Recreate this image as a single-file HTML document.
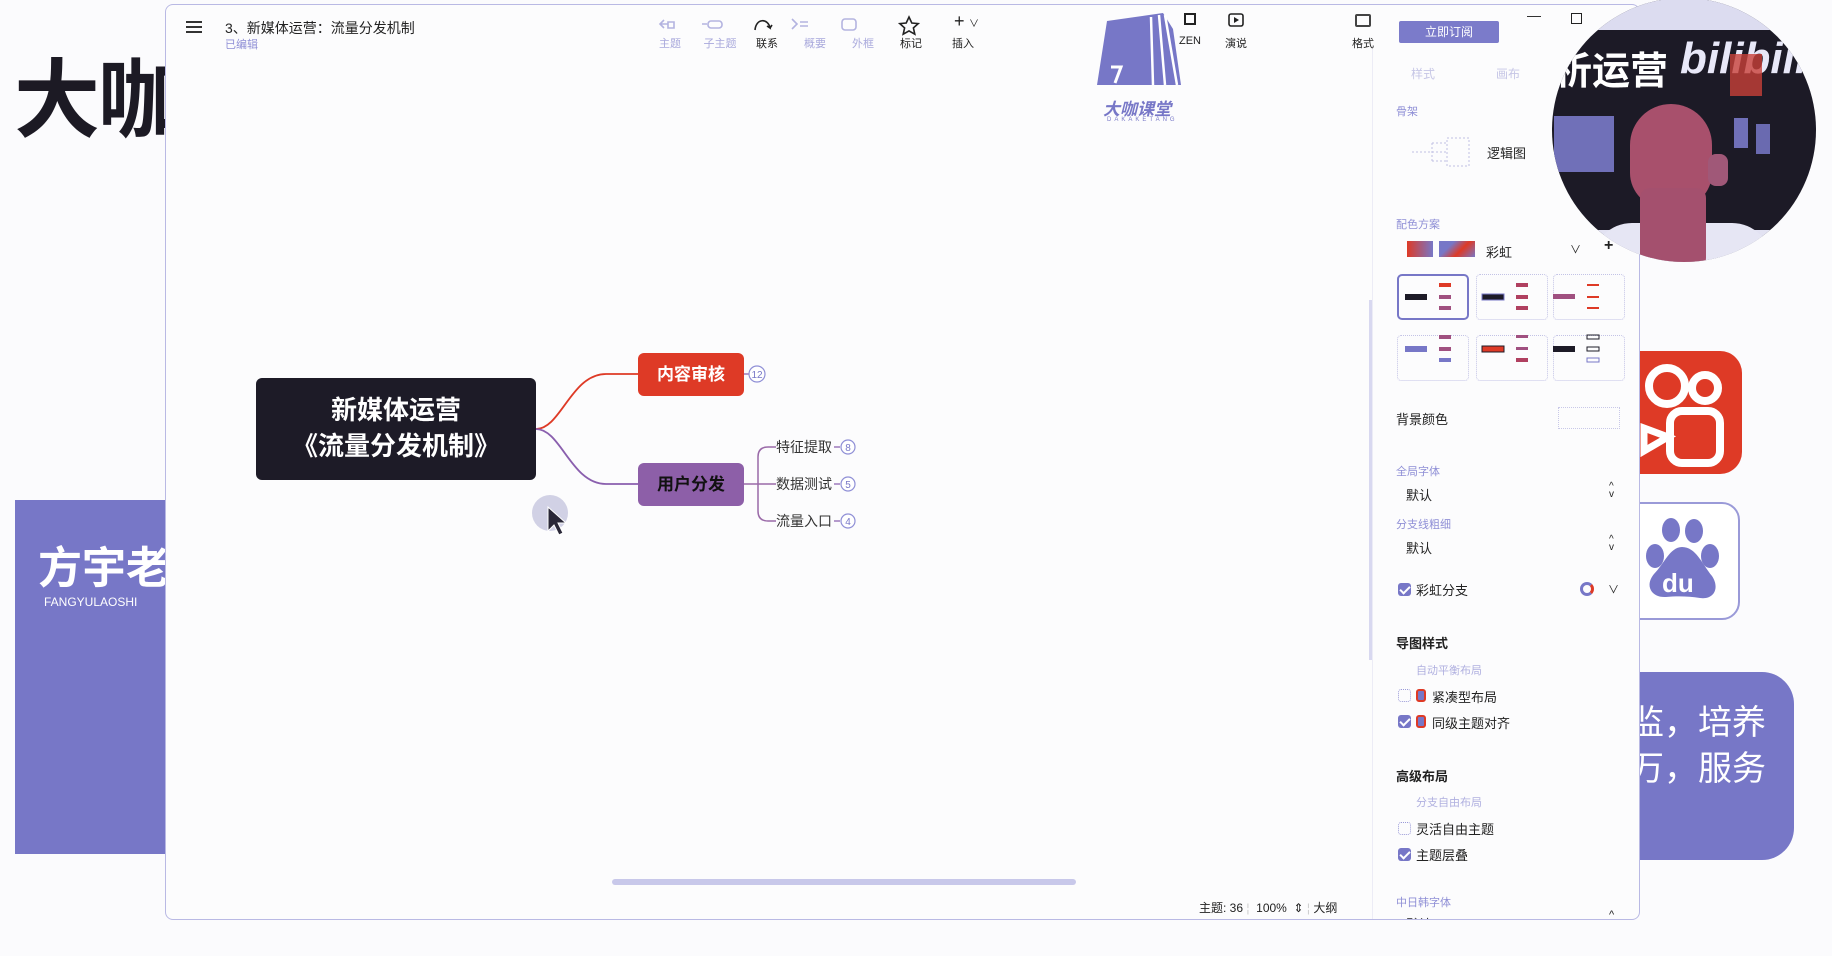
<!DOCTYPE html>
<html><head><meta charset="utf-8">
<style>
*{margin:0;padding:0;box-sizing:border-box}
body{width:1832px;height:956px;overflow:hidden;background:#fbfbfd;font-family:"Liberation Sans","Noto Sans CJK SC",sans-serif;position:relative;color:#222}
.a{position:absolute;white-space:nowrap}
.win{position:absolute;left:165px;top:4px;width:1475px;height:916px;background:#fcfcfd;border:1px solid #b9b9e4;border-radius:8px;overflow:hidden}
.tb{font-size:11px;color:#a9a9dc;text-align:center;width:40px}
.tb.d{color:#222}
.lab{font-size:11px;color:#8f8fd6}
.txt{font-size:13px;color:#222}
.cb{position:absolute;width:13px;height:13px;border-radius:3px}
.cb.on{background:#7777c7}
.cb.on::after{content:"";position:absolute;left:4px;top:1px;width:4px;height:8px;border:solid #fff;border-width:0 2px 2px 0;transform:rotate(45deg)}
.cb.off{border:1px dotted #9a9ad8}
.card{position:absolute;width:72px;height:46px;border:1px dotted #c3c3e6;border-radius:4px}
</style></head><body>
<div class="a" style="left:14px;top:30px;font-size:86px;font-weight:bold;color:#1c1a24;letter-spacing:-2px">大咖</div>
<div class="a" style="left:15px;top:500px;width:160px;height:354px;background:#7777c7"></div>
<div class="a" style="left:38px;top:532px;font-size:44px;font-weight:bold;color:#fff">方宇老</div>
<div class="a" style="left:44px;top:595px;font-size:12px;color:#fff">FANGYULAOSHI</div>
<div class="a" style="left:1630px;top:351px;width:112px;height:123px;background:#de3a26;border-radius:0 22px 22px 0"></div>
<svg class="a" style="left:1630px;top:351px" width="112" height="123" viewBox="0 0 112 123">
<circle cx="37" cy="35" r="18" fill="none" stroke="#fff" stroke-width="8"/>
<circle cx="75" cy="37" r="13" fill="none" stroke="#fff" stroke-width="8"/>
<rect x="40" y="60" width="50" height="52" rx="12" fill="none" stroke="#fff" stroke-width="8"/>
<path d="M14 77 L38 86 L14 100Z" fill="none" stroke="#fff" stroke-width="7"/>
</svg>
<div class="a" style="left:1630px;top:502px;width:110px;height:118px;background:#fff;border:2px solid #9a9ad8;border-radius:0 18px 18px 0"></div>
<svg class="a" style="left:1630px;top:502px" width="110" height="118" viewBox="0 0 110 118">
<g fill="#7777c7"><ellipse cx="41" cy="28" rx="9" ry="12"/><ellipse cx="64" cy="29" rx="9" ry="12"/><ellipse cx="25" cy="54" rx="9" ry="12"/><ellipse cx="80" cy="54" rx="9" ry="12"/>
<path d="M52 45 C40 45 34 62 24 72 C14 84 22 96 36 95 C46 94 58 94 70 96 C84 98 90 86 82 74 C72 62 66 45 52 45Z"/></g>
<text x="32" y="90" font-size="26" font-weight="bold" fill="#fff" font-family="Liberation Sans">du</text>
</svg>
<div class="a" style="left:1630px;top:672px;width:164px;height:188px;background:#7777c7;border-radius:0 32px 32px 0"></div>
<div class="a" style="left:1630px;top:700px;font-size:34px;color:#fff;line-height:46px">监，培养<br>万，服务</div>

<div class="win">
 <div class="a" style="left:20px;top:16px;width:16px;height:2px;background:#333;box-shadow:0 5px 0 #333,0 10px 0 #333"></div>
 <div class="a" style="left:59px;top:13px;font-size:14px;color:#222">3、新媒体运营：流量分发机制</div>
 <div class="a" style="left:59px;top:31px;font-size:11px;color:#8f8fd6">已编辑</div>
 <svg class="a" style="left:490px;top:10px" width="330" height="22" viewBox="0 0 330 22" fill="none" stroke-width="1.6">
  <g stroke="#b3b3e0"><path d="M8 5 l-4 4 4 4 M4 9 h8 M12 7h6v6h-6z"/><rect x="52" y="6" width="14" height="7" rx="3"/><path d="M46 9h5"/><rect x="186" y="4" width="14" height="11" rx="3"/><path d="M136 4l5 5-5 5 M144 7h8 M144 11h8"/></g>
  <path d="M153 15 C154 3 166 3 168 13 l-3 -2 M168 13 l2-3" stroke="#222" transform="translate(-54 0)"/>
  <path d="M290 2 l2.8 6 6.4.6 -4.8 4.3 1.4 6.3 -5.8-3.3 -5.8 3.3 1.4-6.3 -4.8-4.3 6.4-.6z" stroke="#222" transform="translate(-37 0)"/>
 </svg>
 <div class="a" style="left:788px;top:6px;font-size:18px;color:#222">+</div>
 <div class="a" style="left:803px;top:10px;font-size:10px;color:#222">∨</div>
 <div class="a tb" style="left:484px;top:30px">主题</div>
 <div class="a tb" style="left:534px;top:30px">子主题</div>
 <div class="a tb d" style="left:581px;top:30px">联系</div>
 <div class="a tb" style="left:629px;top:30px">概要</div>
 <div class="a tb" style="left:677px;top:30px">外框</div>
 <div class="a tb d" style="left:725px;top:30px">标记</div>
 <div class="a tb d" style="left:777px;top:30px">插入</div>
 <svg class="a" style="left:927px;top:4px" width="110" height="80" viewBox="0 0 110 80">
  <path d="M14 12 L70 4 L80 20 L88 76 L4 76Z" fill="#7777c7"/>
  <path d="M66 6 L72 76 M72 6 L84 76 M58 8 L60 76" stroke="#fff" stroke-width="2.5" fill="none"/>
  <path d="M18 58 h10 l-6 16" stroke="#fff" stroke-width="3" fill="none"/>
 </svg>
 <div class="a" style="left:937px;top:90px;font-size:17px;font-weight:bold;font-style:italic;color:#7777c7">大咖课堂</div>
 <div class="a" style="left:941px;top:112px;font-size:6px;letter-spacing:3px;color:#7777c7">DAKAKETANG</div>
 <div class="a" style="left:1018px;top:8px;width:12px;height:12px;border:2px solid #222;border-left-style:dashed"></div>
 <div class="a tb d" style="left:1004px;top:30px">ZEN</div>
 <svg class="a" style="left:1062px;top:8px" width="16" height="14"><rect x="1" y="1" width="14" height="12" rx="2" fill="none" stroke="#222" stroke-width="1.6"/><path d="M6 4l5 3-5 3z" fill="#222"/></svg>
 <div class="a tb d" style="left:1050px;top:30px">演说</div>
 <div class="a" style="left:1189px;top:9px;width:16px;height:13px;border:2px solid #444;border-radius:2px"></div>
 <div class="a tb d" style="left:1177px;top:30px">格式</div>
 <div class="a" style="left:1233px;top:16px;width:100px;height:22px;background:#7b7bca;border-radius:2px;color:#fff;font-size:12px;text-align:center;line-height:22px">立即订阅</div>
 <div class="a" style="left:1361px;top:2px;font-size:14px">—</div>
 <div class="a" style="left:1405px;top:8px;width:11px;height:11px;border:1.5px solid #222"></div>

 <svg class="a" style="left:0;top:0" width="1210" height="916">
  <path d="M370 424 C395 424 405 369 440 369 L472 369" stroke="#de3a26" stroke-width="1.8" fill="none"/>
  <path d="M370 424 C395 424 405 479 440 479 L472 479" stroke="#8a5fae" stroke-width="1.8" fill="none"/>
  <path d="M578 479 H592 M592 452 V506 M592 452 q0-10 10-10 H610 M592 479 H610 M592 506 q0 10 10 10 H610" stroke="#9a6aa8" stroke-width="1.5" fill="none"/>
  <path d="M578 369 h6 M668 442h6 M668 479h6 M668 516h6" stroke="#8a5fae" stroke-width="1.2"/>
  <g fill="#fff" stroke="#8f8fd6" stroke-width="1.2"><circle cx="591" cy="369" r="8"/><circle cx="682" cy="442" r="7"/><circle cx="682" cy="479" r="7"/><circle cx="682" cy="516" r="7"/></g>
  <g font-size="10" fill="#7777c7" text-anchor="middle" font-family="Liberation Sans"><text x="591" y="373">12</text><text x="682" y="446">8</text><text x="682" y="483">5</text><text x="682" y="520">4</text></g>
  <rect x="1203" y="295" width="4" height="360" fill="#d8d8f0"/>
  <rect x="446" y="874" width="464" height="6" rx="3" fill="#c8c8ea"/>
  <circle cx="384" cy="508" r="18" fill="#c6c6de" opacity=".8"/>
  <path d="M382 502 L382 526 L388 520 L393 530 L397 528 L392 518 L400 518Z" fill="#2a2838" stroke="#fff" stroke-width="1"/>
 </svg>
 <div class="a" style="left:90px;top:373px;width:280px;height:102px;background:#1d1b27;border-radius:6px;color:#fff;font-size:26px;font-weight:bold;text-align:center;line-height:36px;padding-top:14px">新媒体运营<br>《流量分发机制》</div>
 <div class="a" style="left:472px;top:348px;width:106px;height:43px;background:#de3a26;border-radius:6px;color:#fff;font-size:17px;font-weight:bold;text-align:center;line-height:43px">内容审核</div>
 <div class="a" style="left:472px;top:458px;width:106px;height:43px;background:#8d5fa8;border-radius:6px;color:#111;font-size:17px;font-weight:bold;text-align:center;line-height:43px">用户分发</div>
 <div class="a" style="left:610px;top:432px;font-size:14px;color:#333">特征提取</div>
 <div class="a" style="left:610px;top:469px;font-size:14px;color:#333">数据测试</div>
 <div class="a" style="left:610px;top:506px;font-size:14px;color:#333">流量入口</div>
 <div class="a" style="left:1033px;top:894px;font-size:12px;color:#222">主题: 36 <span style="color:#ccc">¦</span>&nbsp; 100% &nbsp;⇕ <span style="color:#ccc">¦</span> 大纲</div>

 <div class="a" style="left:1206px;top:44px;width:1px;height:870px;background:#ececf6"></div>
 <div class="a" style="left:1245px;top:60px;font-size:12px;color:#c6c6e6">样式</div>
 <div class="a" style="left:1330px;top:60px;font-size:12px;color:#c6c6e6">画布</div>
 <div class="a lab" style="left:1230px;top:98px">骨架</div>
 <svg class="a" style="left:1244px;top:130px" width="65" height="35"><path d="M2 17h20 M22 8 v18 M22 8h15 M22 17h15 M22 26h15" stroke="#c0c0e4" stroke-dasharray="2 2" fill="none"/><rect x="37" y="3" width="22" height="28" fill="none" stroke="#c0c0e4" stroke-dasharray="2 2"/></svg>
 <div class="a txt" style="left:1321px;top:138px">逻辑图</div>
 <div class="a lab" style="left:1230px;top:211px">配色方案</div>
 <div class="a" style="left:1241px;top:236px;width:26px;height:16px;background:linear-gradient(90deg,#de3a26,#7777c7)"></div>
 <div class="a" style="left:1273px;top:236px;width:36px;height:16px;background:linear-gradient(135deg,#7777c7 30%,#de3a26 60%,#7777c7)"></div>
 <div class="a txt" style="left:1320px;top:237px">彩虹</div>
 <div class="a" style="left:1404px;top:236px;font-size:11px">∨</div>
 <div class="a" style="left:1438px;top:232px;font-size:16px;font-weight:bold">+</div>
 <div class="card" style="left:1231px;top:269px;border:2px solid #7777c7;border-radius:5px"></div>
 <div class="card" style="left:1310px;top:269px"></div>
 <div class="card" style="left:1387px;top:269px"></div>
 <div class="card" style="left:1231px;top:330px"></div>
 <div class="card" style="left:1310px;top:330px"></div>
 <div class="card" style="left:1387px;top:330px"></div>
 <svg class="a" style="left:1231px;top:269px" width="230" height="110">
  <g><rect x="8" y="20" width="22" height="6" fill="#1d1b27"/><rect x="42" y="9" width="12" height="4" fill="#de3a26"/><rect x="42" y="21" width="12" height="4" fill="#a05080"/><rect x="42" y="32" width="12" height="4" fill="#a05080"/></g>
  <g transform="translate(78 0)"><rect x="7" y="20" width="22" height="6" fill="#1d1b27" stroke="#7777c7"/><rect x="41" y="9" width="12" height="4" fill="#b04060"/><rect x="41" y="21" width="12" height="4" fill="#b04060"/><rect x="41" y="32" width="12" height="4" fill="#b04060"/></g>
  <g transform="translate(156 0)"><rect x="0" y="20" width="22" height="5" fill="#a05080"/><rect x="34" y="10" width="12" height="2" fill="#de3a26"/><rect x="34" y="22" width="12" height="2" fill="#de3a26"/><rect x="34" y="33" width="12" height="2" fill="#de3a26"/></g>
  <g transform="translate(0 52)"><rect x="8" y="20" width="22" height="6" fill="#7777c7"/><rect x="42" y="9" width="12" height="4" fill="#a05080"/><rect x="42" y="21" width="12" height="4" fill="#a05080"/><rect x="42" y="32" width="12" height="4" fill="#7777c7"/></g>
  <g transform="translate(78 52)"><rect x="7" y="20" width="22" height="6" fill="#de3a26" stroke="#1d1b27"/><rect x="41" y="9" width="12" height="3" fill="#a05080"/><rect x="41" y="21" width="12" height="3" fill="#a05080"/><rect x="41" y="32" width="12" height="4" fill="#b04060"/></g>
  <g transform="translate(156 52)"><rect x="0" y="20" width="22" height="6" fill="#1d1b27"/><rect x="34" y="9" width="12" height="4" fill="none" stroke="#1d1b27"/><rect x="34" y="21" width="12" height="4" fill="none" stroke="#1d1b27"/><rect x="34" y="32" width="12" height="4" fill="none" stroke="#7777c7"/></g>
 </svg>
 <div class="a txt" style="left:1230px;top:404px">背景颜色</div>
 <div class="a" style="left:1392px;top:402px;width:62px;height:22px;border:1px dotted #c8c8e8"></div>
 <div class="a lab" style="left:1230px;top:458px">全局字体</div>
 <div class="a txt" style="left:1240px;top:480px">默认</div>
 <div class="a" style="left:1443px;top:478px;font-size:10px;line-height:8px">^<br>v</div>
 <div class="a lab" style="left:1230px;top:511px">分支线粗细</div>
 <div class="a txt" style="left:1240px;top:533px">默认</div>
 <div class="a" style="left:1443px;top:531px;font-size:10px;line-height:8px">^<br>v</div>
 <div class="cb on" style="left:1232px;top:578px"></div>
 <div class="a txt" style="left:1250px;top:575px">彩虹分支</div>
 <div class="a" style="left:1414px;top:577px;width:14px;height:14px;border-radius:50%;border:3px solid #7777c7;border-right-color:#de3a26"></div>
 <div class="a" style="left:1442px;top:576px;font-size:11px">∨</div>
 <div class="a" style="left:1230px;top:628px;font-size:13px;font-weight:bold;color:#222">导图样式</div>
 <div class="a lab" style="left:1250px;top:657px;color:#b0b0e0">自动平衡布局</div>
 <div class="cb off" style="left:1232px;top:684px"></div>
 <div class="a" style="left:1250px;top:684px;width:10px;height:13px;border-radius:3px;background:#7777c7;border:2px solid #de3a26"></div>
 <div class="a txt" style="left:1266px;top:682px">紧凑型布局</div>
 <div class="cb on" style="left:1232px;top:710px"></div>
 <div class="a" style="left:1250px;top:710px;width:10px;height:13px;border-radius:3px;background:#7777c7;border:2px solid #de3a26"></div>
 <div class="a txt" style="left:1266px;top:708px">同级主题对齐</div>
 <div class="a" style="left:1230px;top:761px;font-size:13px;font-weight:bold;color:#222">高级布局</div>
 <div class="a lab" style="left:1250px;top:789px;color:#b0b0e0">分支自由布局</div>
 <div class="cb off" style="left:1232px;top:817px"></div>
 <div class="a txt" style="left:1250px;top:814px">灵活自由主题</div>
 <div class="cb on" style="left:1232px;top:843px"></div>
 <div class="a txt" style="left:1250px;top:840px">主题层叠</div>
 <div class="a lab" style="left:1230px;top:889px">中日韩字体</div>
 <div class="a txt" style="left:1240px;top:909px">默认</div>
 <div class="a" style="left:1443px;top:904px;font-size:11px">^</div>
</div>

<div class="a" style="left:1552px;top:-2px;width:264px;height:264px;border-radius:50%;overflow:hidden;background:#1c1a26">
 <div class="a" style="left:0;top:0;width:264px;height:32px;background:#dcdcf0"></div>
 <div class="a" style="left:0;top:232px;width:264px;height:40px;background:#e2e2f2"></div>
 <div class="a" style="left:2px;top:42px;font-size:38px;font-weight:bold;color:#fff">析运营</div>
 <div class="a" style="left:128px;top:36px;font-size:44px;font-weight:bold;color:#e8e8f8;font-style:italic">bilibili</div>
 <div class="a" style="left:178px;top:56px;width:32px;height:42px;background:#c84038;opacity:.8"></div>
 <div class="a" style="left:2px;top:118px;width:60px;height:56px;background:#7070b8"></div>
 <div class="a" style="left:40px;top:225px;width:180px;height:60px;border-radius:40px 40px 0 0;background:#e6e6f4"></div>
 <div class="a" style="left:78px;top:106px;width:82px;height:104px;border-radius:42px 42px 36px 36px;background:#a8506c"></div>
 <div class="a" style="left:88px;top:190px;width:66px;height:80px;border-radius:10px;background:#a4506e"></div>
 <div class="a" style="left:156px;top:156px;width:20px;height:32px;border-radius:8px;background:#a05878"></div>
 <div class="a" style="left:182px;top:120px;width:14px;height:30px;background:#7070b8"></div>
 <div class="a" style="left:204px;top:126px;width:14px;height:30px;background:#6a6ab0"></div>
</div>
</body></html>
